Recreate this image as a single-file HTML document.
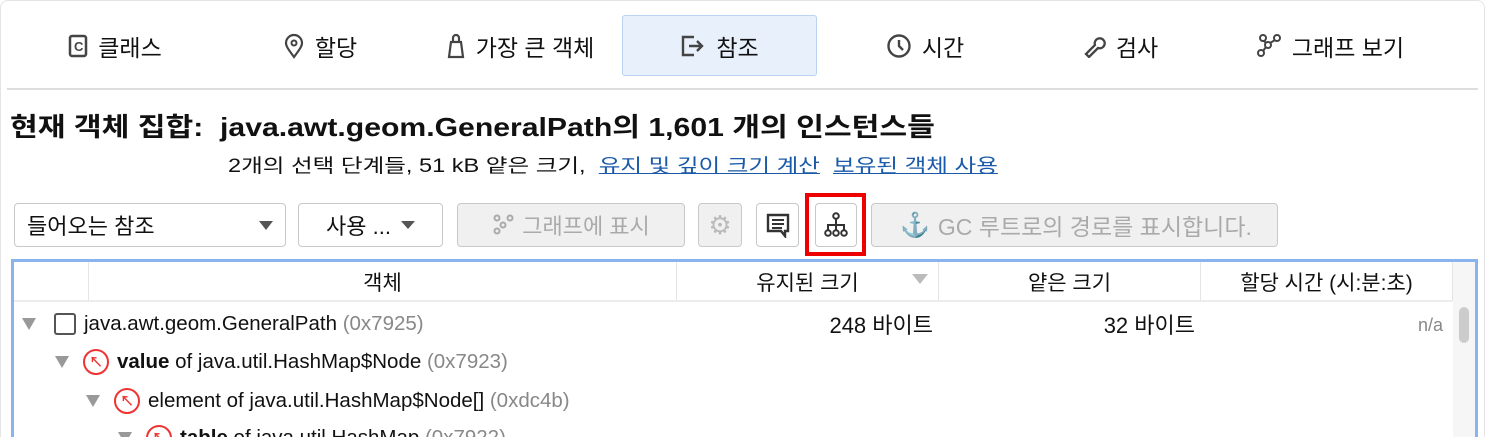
<!DOCTYPE html>
<html style="overflow:hidden"><head><meta charset="utf-8"><style>
*{box-sizing:border-box;margin:0;padding:0}
html,body{width:1485px;height:437px;overflow:hidden}
body{background:#fff;font-family:"Liberation Sans","Noto Sans CJK KR",sans-serif;color:#111;position:relative}
.a{position:absolute;white-space:nowrap}
.tab{position:absolute;top:15px;height:61px;display:flex;align-items:center;justify-content:center;font-size:23px;gap:10px}
.btn{position:absolute;top:203px;height:44px;border:1px solid #c8c8c8;border-radius:4px;background:#fff;display:flex;align-items:center;font-size:22px}
.dis{background:#f0f0f0;color:#aaa}
.hd{position:absolute;top:262px;height:39px;border-right:1px solid #e4e4e4;display:flex;align-items:center;justify-content:center;font-size:21px}
.row{position:absolute;font-size:20.5px;display:flex;align-items:center;gap:8px;white-space:nowrap}
.gray{color:#888}
.tri{width:0;height:0;border-left:7px solid transparent;border-right:7px solid transparent;border-top:12px solid #999}
.ri{width:26px;height:26px;border:2.5px solid #e33;border-radius:50%;display:flex;align-items:center;justify-content:center;color:#e33;font-size:14px;font-weight:bold}
</style></head><body>
<div style="position:absolute;left:0;top:0;width:1485px;height:437px;border:1px solid #e4e4e4;border-bottom:none;border-radius:8px 8px 0 0"></div>
<div class="tab" style="left:40px;width:150px"><svg width="20" height="24"><rect x="2" y="2" width="16" height="20" rx="2" fill="none" stroke="#444" stroke-width="2.5"/><text x="6" y="17" font-size="13" font-family="Liberation Sans" fill="#444" font-weight="bold">C</text></svg>클래스</div>
<div class="tab" style="left:250px;width:140px"><svg width="22" height="26"><path d="M11 24C5 16 3 13 3 10a8 8 0 0 1 16 0c0 3-2 6-8 14z" fill="none" stroke="#444" stroke-width="2.2"/><circle cx="11" cy="10" r="2.5" fill="none" stroke="#444" stroke-width="2"/></svg>할당</div>
<div class="tab" style="left:430px;width:180px"><svg width="20" height="26"><path d="M3 24L5 9H15L17 24Z M7 9V5a3 3 0 0 1 6 0V9" fill="none" stroke="#444" stroke-width="2.2"/></svg>가장 큰 객체</div>
<div class="tab" style="left:622px;width:195px;background:#e7f0fb;border:1px solid #b9d3f0;border-radius:3px"><svg width="26" height="24"><path d="M14 3H3V21H14M9 12H22M17 7l5 5-5 5" fill="none" stroke="#444" stroke-width="2.4"/></svg>참조</div>
<div class="tab" style="left:860px;width:130px"><svg width="26" height="26"><circle cx="13" cy="13" r="10.5" fill="none" stroke="#444" stroke-width="2.4"/><path d="M13 7v6l4 4" fill="none" stroke="#444" stroke-width="2.4"/></svg>시간</div>
<div class="tab" style="left:1060px;width:120px"><svg width="24" height="24"><path d="M4 20l9-9a5 5 0 1 1 3 3l-9 9z" fill="none" stroke="#444" stroke-width="2.3"/></svg>검사</div>
<div class="tab" style="left:1250px;width:160px"><svg width="26" height="26"><circle cx="5" cy="20" r="3" fill="none" stroke="#444" stroke-width="2"/><circle cx="12" cy="12" r="3" fill="none" stroke="#444" stroke-width="2"/><circle cx="21" cy="5" r="3" fill="none" stroke="#444" stroke-width="2"/><circle cx="7" cy="5" r="3" fill="none" stroke="#444" stroke-width="2"/><path d="M7 18l3-4M14 10l5-3M8 8l2 2" stroke="#444" stroke-width="2"/></svg>그래프 보기</div>
<div class="a" style="left:7px;top:88px;width:1471px;height:2px;background:#ddd"></div>
<div class="a" style="left:10px;top:107px;font-size:26px;font-weight:bold;transform:scaleX(1.16);transform-origin:0 0">현재 객체 집합:&nbsp; java.awt.geom.GeneralPath의 1,601 개의 인스턴스들</div>
<div class="a" style="left:228px;top:151px;font-size:19px;transform:scaleX(1.24);transform-origin:0 0">2개의 선택 단계들, 51 kB 얕은 크기,&nbsp; <span style="color:#1a5aa8;text-decoration:underline">유지 및 깊이 크기 계산</span>&nbsp; <span style="color:#1a5aa8;text-decoration:underline">보유된 객체 사용</span></div>
<div class="btn" style="left:14px;width:272px;padding-left:12px">들어오는 참조<div class="tri" style="position:absolute;right:12px;border-top-color:#555;border-width:9px 7px 0"></div></div>
<div class="btn" style="left:298px;width:145px;justify-content:center;gap:10px">사용 ...<div class="tri" style="border-top-color:#555;border-width:8px 7px 0"></div></div>
<div class="btn dis" style="left:457px;width:228px;justify-content:center;gap:8px"><svg width="22" height="22"><circle cx="5" cy="17" r="2.5" fill="none" stroke="#aaa" stroke-width="2"/><circle cx="11" cy="11" r="2.5" fill="none" stroke="#aaa" stroke-width="2"/><circle cx="18" cy="4" r="2.5" fill="none" stroke="#aaa" stroke-width="2"/><circle cx="5" cy="4" r="2.5" fill="none" stroke="#aaa" stroke-width="2"/></svg>그래프에 표시</div>
<div class="btn dis" style="left:698px;width:44px;justify-content:center;color:#bbb;font-size:26px">⚙</div>
<div class="btn" style="left:756px;width:43px;justify-content:center"><svg width="26" height="26"><path d="M3 3H23V19H20V24L16 19H3Z" fill="none" stroke="#333" stroke-width="2.4"/><path d="M7 8H19M7 12H19M7 16H17" stroke="#333" stroke-width="2"/></svg></div>
<div class="a" style="left:805px;top:193px;width:61px;height:63px;border:4px solid #e00"></div>
<div class="btn" style="left:815px;width:42px;justify-content:center"><svg width="26" height="26"><circle cx="13" cy="4" r="2.8" fill="none" stroke="#333" stroke-width="2"/><path d="M13 7V13M5 19V13H21V19M13 13V19" stroke="#333" stroke-width="2" fill="none"/><circle cx="5" cy="21" r="2.8" fill="none" stroke="#333" stroke-width="2"/><circle cx="13" cy="21" r="2.8" fill="none" stroke="#333" stroke-width="2"/><circle cx="21" cy="21" r="2.8" fill="none" stroke="#333" stroke-width="2"/></svg></div>
<div class="btn dis" style="left:871px;width:407px;padding-left:28px;gap:8px;font-size:23px"><span style="font-size:24px">⚓</span>GC 루트로의 경로를 표시합니다.</div>
<div class="a" style="left:11px;top:259px;width:1467px;height:178px;border:3px solid #8ab4ee;border-bottom:none"></div>
<div class="hd" style="left:14px;width:75px"></div>
<div class="hd" style="left:89px;width:588px">객체</div>
<div class="hd" style="left:677px;width:262px">유지된 크기<div class="tri" style="position:absolute;right:10px;top:12px;border-top-color:#bbb;border-width:10px 8px 0"></div></div>
<div class="hd" style="left:939px;width:262px">얕은 크기</div>
<div class="hd" style="left:1201px;width:252px">할당 시간 (시:분:초)</div>
<div class="a" style="left:14px;top:300px;width:1439px;height:2px;background:#ececec"></div>
<div class="a" style="left:1453px;top:262px;width:22px;height:175px;background:#f6f6f6"></div>
<div class="a" style="left:1459px;top:307px;width:10px;height:36px;background:#ccc;border-radius:5px"></div>
<div class="row" style="left:22px;top:312px"><div class="tri"></div><div style="width:22px;height:22px;border:2.5px solid #555;border-radius:3px;margin-left:10px"></div><span>java.awt.geom.GeneralPath <span class="gray">(0x7925)</span></span></div>
<div class="a" style="left:700px;width:233px;text-align:right;top:308px;font-size:22px">248 바이트</div>
<div class="a" style="left:960px;width:235px;text-align:right;top:308px;font-size:22px">32 바이트</div>
<div class="a gray" style="left:1418px;top:315px;font-size:18px">n/a</div>
<div class="row" style="left:55px;top:349px"><div class="tri"></div><div class="ri" style="margin-left:6px">↖</div><span><b>value</b> of java.util.HashMap$Node <span class="gray">(0x7923)</span></span></div>
<div class="row" style="left:86px;top:388px"><div class="tri"></div><div class="ri" style="margin-left:6px">↖</div><span>element of java.util.HashMap$Node[] <span class="gray">(0xdc4b)</span></span></div>
<div class="row" style="left:118px;top:425px"><div class="tri"></div><div class="ri" style="margin-left:6px">↖</div><span><b>table</b> of java.util.HashMap <span class="gray">(0x7922)</span></span></div>
</body></html>
